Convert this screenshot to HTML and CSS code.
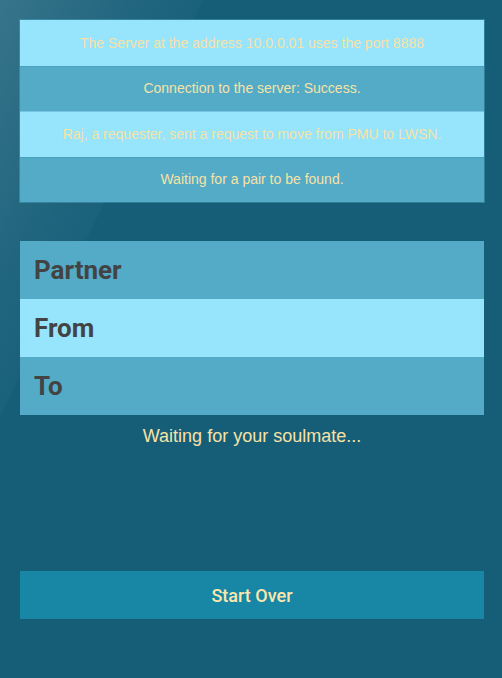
FILE: index.html
```html
<!DOCTYPE html>
<html>
<head>
<meta charset="utf-8">
<link rel="stylesheet" href="styles.css">
</head>
<body>
<div class="page">
  <div class="log">
    <div class="log-row light">The Server at the address 10.0.0.01 uses the port 8888</div>
    <div class="log-row dark">Connection to the server: Success.</div>
    <div class="log-row light">Raj, a requester, sent a request to move from PMU to LWSN.</div>
    <div class="log-row dark">Waiting for a pair to be found.</div>
  </div>
  <div class="info">
    <div class="info-row dark">Partner</div>
    <div class="info-row light">From</div>
    <div class="info-row dark">To</div>
  </div>
  <p class="status">Waiting for your soulmate...</p>
  <button class="restart">Start Over</button>
</div>
</body>
</html>
```
FILE: styles.css
```css
html, body {
  margin: 0;
  padding: 0;
  height: 100%;
}
body {
  background:
    linear-gradient(116deg, rgba(255,255,255,0.14) 0%, rgba(255,255,255,0.05) 120px, rgba(255,255,255,0.02) 182px, rgba(255,255,255,0) 183px),
    #165e78;
  font-family: "Liberation Sans", Arial, sans-serif;
}
.page {
  padding: 20px 18px 0 20px;
  display: flex;
  flex-direction: column;
}
.log {
  display: flex;
  flex-direction: column;
  outline: 1px solid rgba(70, 150, 180, 0.6);
}
.log-row {
  height: 45.5px;
  display: flex;
  align-items: center;
  justify-content: center;
  font-size: 14px;
  color: #f6e2a5;
}
.light { background: #97e4fd; }
.dark { background: #53abc8; }
.log-row + .log-row { box-shadow: inset 0 1px 0 rgba(60, 140, 170, 0.35); }
.info {
  margin-top: 39px;
  display: flex;
  flex-direction: column;
}
.info-row {
  height: 58px;
  display: flex;
  align-items: center;
  padding-left: 14px;
  font-family: Roboto, "Liberation Sans", sans-serif;
  font-weight: 700;
  font-size: 26px;
  color: #434343;
}
.status {
  margin: 11px 0 0;
  text-align: center;
  font-size: 18px;
  color: #f6e2a5;
}
.restart {
  margin-top: 124px;
  height: 48px;
  border: none;
  background: #1787a5;
  color: #fbe6ad;
  font-family: Roboto, "Liberation Sans", sans-serif;
  font-weight: 500;
  font-size: 18px;
  padding: 0;
}
```
